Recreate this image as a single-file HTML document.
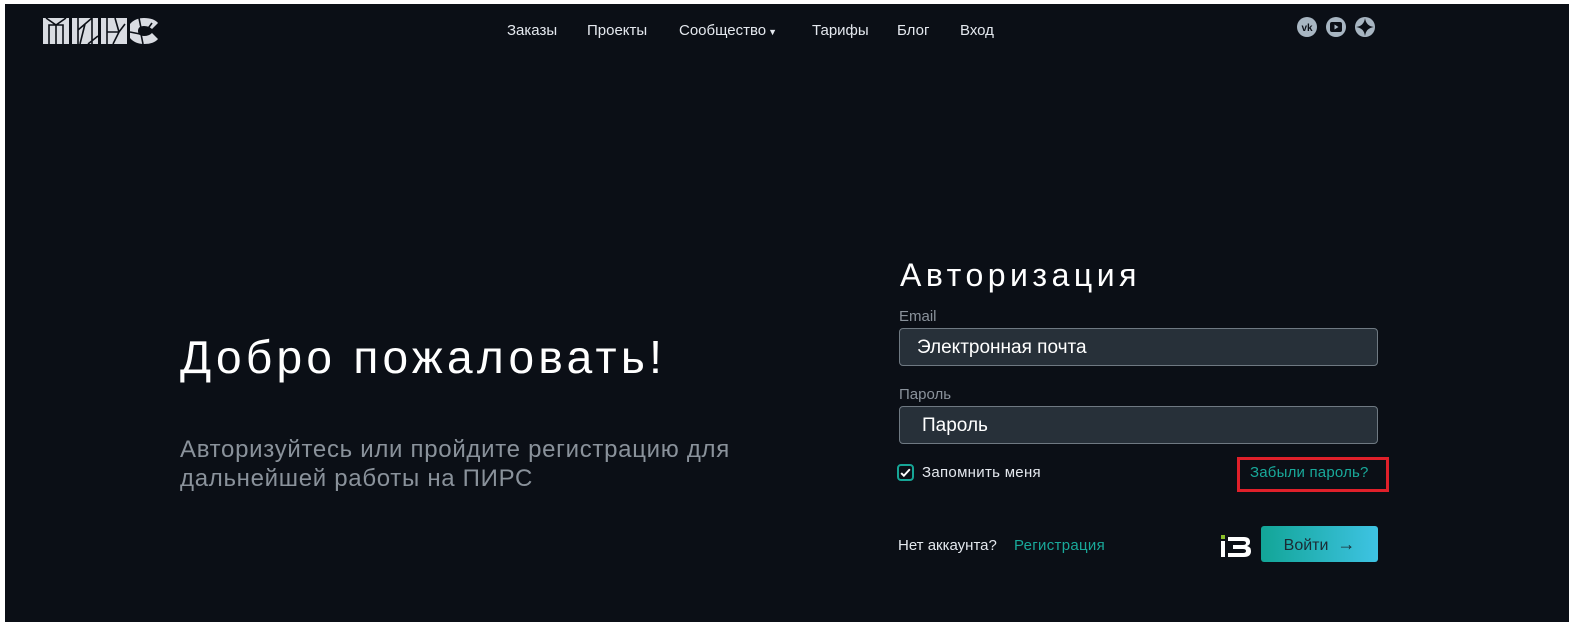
<!DOCTYPE html>
<html><head><meta charset="utf-8"><style>
html,body{margin:0;padding:0;background:#fff;width:1574px;height:627px;overflow:hidden;font-family:"Liberation Sans",sans-serif}
.page{position:absolute;left:5px;top:4px;width:1564px;height:618px;background:#0b0f16;color:#fff}
.a{position:absolute;white-space:nowrap}
.nav{font-size:15px;color:#e4e8ee;top:18px}
.inp{position:absolute;left:894px;width:479px;height:38px;background:#273039;border:1px solid #6f7982;border-radius:4px;box-sizing:border-box;font-size:19px;color:#fff;line-height:38px}
.lbl{font-size:15px;color:#8a929b}
</style></head><body><div class="page">
<svg class="a" style="left:38px;top:12px" width="116" height="30" viewBox="0 0 116 30">
<g fill="#d9dce2"><rect x="0" y="2" width="26" height="26"/><rect x="29" y="2" width="26" height="26"/><rect x="58" y="2" width="26" height="26"/><path d="M87 8q5-6 14-6q10 0 14 5l-6 6q-3-3-8-3q-6 0-6 5q0 5 6 5q5 0 8-3l6 6q-4 5-14 5q-9 0-14-6z"/></g>
<g stroke="#0b0f16" stroke-width="1.6" fill="none"><path d="M6 28V9h14v19M3 2l10 7 10-7M13 9v19M35 28V2M49 28V2M35 14l14-12M42 8l-5 20M55 20l-10 8M64 28V2M64 16h12l6-8M72 2l4 14M70 28l6-12M87 16l10 2M96 2l2 10M100 28l-2-10M109 7l-8 11"/></g></svg>
<div class="a nav" style="left:502px">Заказы</div>
<div class="a nav" style="left:582px">Проекты</div>
<div class="a nav" style="left:674px">Сообщество<span style="font-size:9px;margin-left:2px">▼</span></div>
<div class="a nav" style="left:807px">Тарифы</div>
<div class="a nav" style="left:892px">Блог</div>
<div class="a nav" style="left:955px">Вход</div>
<svg class="a" style="left:1292px;top:13px" width="80" height="20" viewBox="0 0 80 20">
<circle cx="10" cy="10" r="10" fill="#a8b6c2"/><text x="10" y="14" font-size="10" font-weight="bold" text-anchor="middle" fill="#0b0f16" font-family="Liberation Sans">vk</text>
<circle cx="39" cy="10" r="10" fill="#a8b6c2"/><rect x="33" y="5" width="12" height="10" rx="2" fill="#0b0f16"/><path d="M37.5 7.5v5l4-2.5z" fill="#a8b6c2"/>
<circle cx="68" cy="10" r="10" fill="#a8b6c2"/><path d="M68 1q1 8 9 9q-8 1-9 9q-1-8-9-9q8-1 9-9z" fill="#0b0f16"/></svg>
<div class="a" style="left:175px;top:326px;font-size:46px;letter-spacing:4.3px;color:#fff">Добро пожаловать!</div>
<div class="a" style="left:175px;top:431px;font-size:24px;line-height:29px;color:#8a929b;letter-spacing:0.7px">Авторизуйтесь или пройдите регистрацию для<br>дальнейшей работы на ПИРС</div>
<div class="a" style="left:895px;top:253px;font-size:32px;letter-spacing:4.5px">Авторизация</div>
<div class="a lbl" style="left:894px;top:304px">Email</div>
<div class="inp" style="top:324px;padding-left:17px">Электронная почта</div>
<div class="a lbl" style="left:894px;top:382px">Пароль</div>
<div class="inp" style="top:402px;padding-left:22px">Пароль</div>
<div class="a" style="left:892px;top:460px;width:17px;height:17px;border:2px solid #16a596;border-radius:4px;box-sizing:border-box"><svg width="13" height="13" viewBox="0 0 12 12" style="position:absolute;left:0;top:0"><path d="M2 6.5l2.5 2.5 5.5-6" stroke="#fff" stroke-width="1.8" fill="none"/></svg></div>
<div class="a" style="left:917px;top:460px;font-size:15px;color:#e4e8ee;letter-spacing:0.3px">Запомнить меня</div>
<div class="a" style="left:1232px;top:453px;width:152px;height:35px;border:3px solid #e0202a;box-sizing:border-box"></div>
<div class="a" style="left:1245px;top:460px;font-size:15px;color:#19a99a;letter-spacing:0.2px">Забыли пароль?</div>
<div class="a" style="left:893px;top:533px;font-size:15px;color:#e4e8ee">Нет аккаунта?</div>
<div class="a" style="left:1009px;top:533px;font-size:15px;color:#19a99a;letter-spacing:0.3px">Регистрация</div>
<svg class="a" style="left:1216px;top:531px" width="32" height="24" viewBox="0 0 32 24"><rect x="0" y="0" width="4" height="4" fill="#8bbf2a"/><rect x="0" y="6" width="4" height="16" fill="#fff"/><path d="M7 2h16q6 0 6 5q0 3-3 4q4 1 4 5q0 6-7 6H7v-4h15q3 0 3-2q0-2-3-2H12v-4h10q3 0 3-2q0-2-3-2H7z" fill="#fff"/></svg>
<div class="a" style="left:1256px;top:522px;width:117px;height:36px;border-radius:3px;background:linear-gradient(90deg,#12a597,#3ec3e3);color:#1b2a33;font-size:16px;line-height:36px;text-align:center">Войти&nbsp; <span style="font-size:18px">→</span></div>
</div></body></html>
